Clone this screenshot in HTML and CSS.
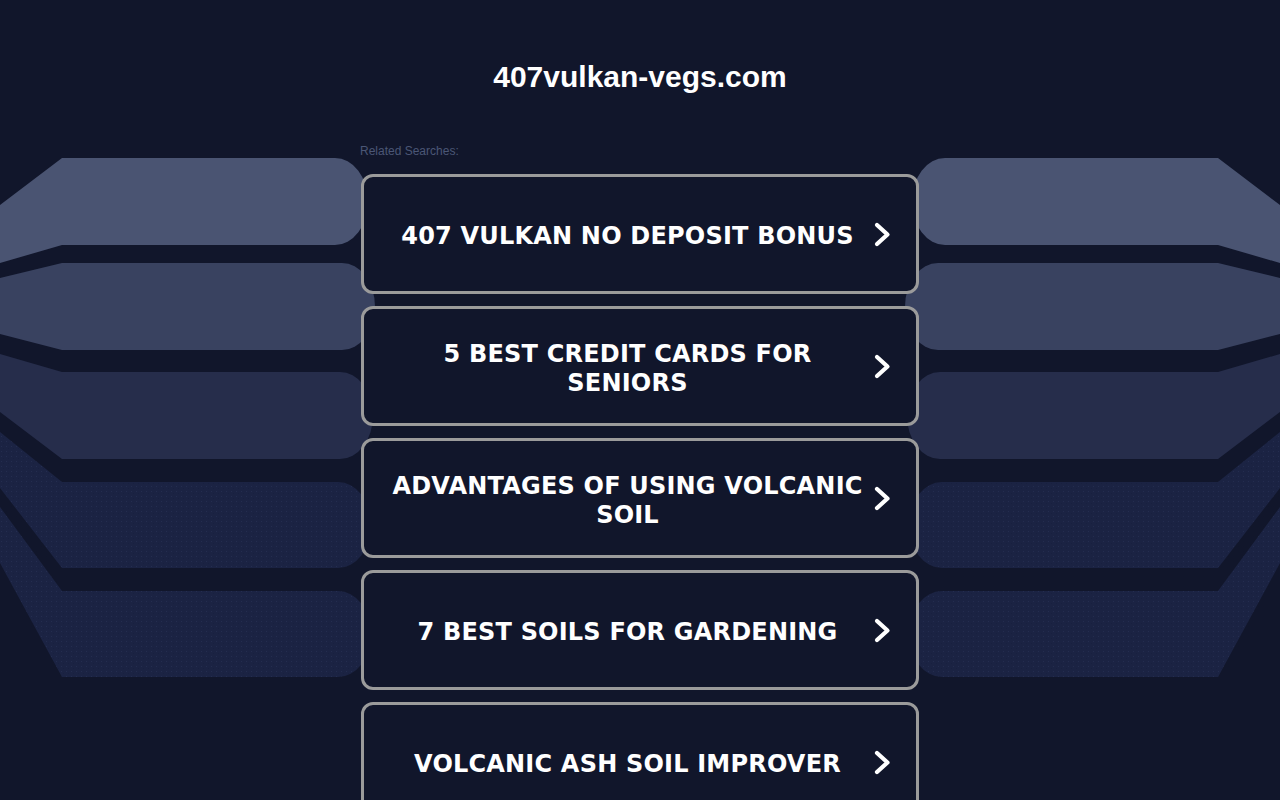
FILE: index.html
```html
<!DOCTYPE html>
<html lang="en">
<head>
<meta charset="utf-8">
<title>407vulkan-vegs.com</title>
<link rel="stylesheet" href="styles.css">
</head>
<body>
<svg class="bg" width="1280" height="800" viewBox="0 0 1280 800" aria-hidden="true">
  <defs>
    <pattern id="dots" width="5" height="5" patternUnits="userSpaceOnUse">
      <rect width="5" height="5" fill="#1b2343"/>
      <rect x="1" y="1" width="1" height="1" fill="#242d50"/>
      <rect x="3" y="3" width="1" height="1" fill="#182040"/>
    </pattern>
    <g id="bands">
      <path d="M0,205 L62,158 H335 A33,43.5 0 0 1 335,245 H62 L0,263 Z" fill="#4a5472"/>
      <path d="M0,278 L62,263 H342 A33,43.5 0 0 1 342,350 H62 L0,334 Z" fill="#394260"/>
      <path d="M0,354 L62,372 H340 A33,43.5 0 0 1 340,459 H62 L0,412 Z" fill="#262d4b"/>
      <path d="M0,432 L62,482 H338 A33,43 0 0 1 338,568 H62 L0,488 Z" fill="url(#dots)"/>
      <path d="M0,507 L62,591 H338 A33,43 0 0 1 338,677 H62 L0,563 Z" fill="url(#dots)"/>
    </g>
  </defs>
  <use href="#bands"/>
  <g transform="translate(1280,0) scale(-1,1)"><use href="#bands"/></g>
</svg>
<main class="page">
  <h1 class="domain">407vulkan-vegs.com</h1>
  <section class="related">
    <p class="related-label">Related Searches:</p>
    <div class="links">
      <a class="link" href="#"><span class="link-text">407 VULKAN NO DEPOSIT BONUS</span><svg class="chev" width="17" height="25" viewBox="0 0 17 25"><path d="M3,3 L13.5,12.5 L3,22" fill="none" stroke="#fff" stroke-width="4.2" stroke-linecap="round" stroke-linejoin="round"/></svg></a>
      <a class="link" href="#"><span class="link-text">5 BEST CREDIT CARDS FOR SENIORS</span><svg class="chev" width="17" height="25" viewBox="0 0 17 25"><path d="M3,3 L13.5,12.5 L3,22" fill="none" stroke="#fff" stroke-width="4.2" stroke-linecap="round" stroke-linejoin="round"/></svg></a>
      <a class="link" href="#"><span class="link-text">ADVANTAGES OF USING VOLCANIC SOIL</span><svg class="chev" width="17" height="25" viewBox="0 0 17 25"><path d="M3,3 L13.5,12.5 L3,22" fill="none" stroke="#fff" stroke-width="4.2" stroke-linecap="round" stroke-linejoin="round"/></svg></a>
      <a class="link" href="#"><span class="link-text">7 BEST SOILS FOR GARDENING</span><svg class="chev" width="17" height="25" viewBox="0 0 17 25"><path d="M3,3 L13.5,12.5 L3,22" fill="none" stroke="#fff" stroke-width="4.2" stroke-linecap="round" stroke-linejoin="round"/></svg></a>
      <a class="link" href="#"><span class="link-text">VOLCANIC ASH SOIL IMPROVER</span><svg class="chev" width="17" height="25" viewBox="0 0 17 25"><path d="M3,3 L13.5,12.5 L3,22" fill="none" stroke="#fff" stroke-width="4.2" stroke-linecap="round" stroke-linejoin="round"/></svg></a>
    </div>
  </section>
</main>
</body>
</html>
```
FILE: styles.css
```css
html, body {
  margin: 0;
  padding: 0;
}
body {
  background: #11162b;
  font-family: "Liberation Sans", Arial, sans-serif;
  position: relative;
  min-height: 800px;
  overflow: hidden;
}
.bg {
  position: absolute;
  top: 0;
  left: 0;
  z-index: 0;
}
.page {
  position: relative;
  z-index: 1;
  display: flex;
  flex-direction: column;
  align-items: center;
  padding-top: 60px;
}
.domain {
  margin: 0;
  font-family: "Liberation Sans", Arial, sans-serif;
  font-weight: bold;
  font-size: 30px;
  line-height: 34px;
  color: #ffffff;
  text-align: center;
}
.related {
  width: 558px;
  margin-top: 50px;
}
.related-label {
  margin: 0 0 16px -1px;
  font-size: 12px;
  line-height: 14px;
  color: #4b5676;
}
.links {
  display: flex;
  flex-direction: column;
  gap: 12px;
}
.link {
  box-sizing: border-box;
  height: 120px;
  border: 3px solid #9b9b9b;
  border-radius: 12px;
  background: #11162b;
  display: flex;
  align-items: center;
  gap: 8px;
  padding: 0 25px 0 25px;
  text-decoration: none;
}
.link-text {
  flex: 1;
  padding-top: 5px;
  text-align: center;
  font-family: "DejaVu Sans", Verdana, sans-serif;
  font-weight: bold;
  font-size: 24px;
  line-height: 29px;
  letter-spacing: 0.2px;
  color: #ffffff;
}
.chev {
  flex: none;
  display: block;
  margin-top: 1px;
}
```
